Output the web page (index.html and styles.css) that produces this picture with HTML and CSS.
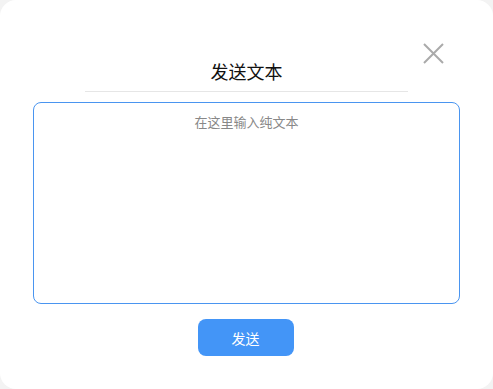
FILE: index.html
```html
<!DOCTYPE html>
<html lang="zh-CN">
<head>
  <meta charset="UTF-8">
  <meta name="viewport" content="width=device-width, initial-scale=1.0">
  <title>发送文本</title>
  <link rel="stylesheet" href="styles.css">
</head>
<body>

  <div class="dialog">
    <!-- 关闭按钮 -->
    <button class="close-btn" aria-label="关闭">
      <svg width="21" height="21" viewBox="0 0 21 21">
        <path d="M1 1 L20 20 M20 1 L1 20" stroke="#aaaaaa" stroke-width="2" fill="none"/>
      </svg>
    </button>

    <div class="dialog-header">
      <h2>发送文本</h2>
    </div>

    <textarea class="text-input" placeholder="在这里输入纯文本"></textarea>

    <div class="dialog-footer">
      <button class="send-btn">发送</button>
    </div>
  </div>

</body>
</html>
```

FILE: styles.css
```css
body {
  margin: 0;
  padding: 0;
  background-color: #f3f3f3;
  font-family: 'Noto Sans CJK SC', 'Noto Sans', sans-serif;
}

.dialog {
  position: relative;
  width: 493px;
  height: 389px;
  box-sizing: border-box;
  background-color: #fff;
  border-radius: 16px;
  padding: 0 33px;
  display: flex;
  flex-direction: column;
  align-items: center;
}

.close-btn {
  position: absolute;
  top: 43px;
  right: 49px;
  padding: 0;
  border: none;
  background: none;
  cursor: pointer;
  line-height: 0;
}

.dialog-header {
  width: 323px;
  padding-top: 59px;
  padding-bottom: 8px;
  border-bottom: 1px solid #e6e6e6;
  text-align: center;
}

h2 {
  margin: 0;
  font-size: 18px;
  font-weight: 400;
  line-height: 24px;
  color: #111;
}

.text-input {
  margin-top: 10px;
  width: 100%;
  height: 202px;
  box-sizing: border-box;
  border: 1px solid #4a95f0;
  border-radius: 8px;
  padding: 10px 12px;
  font-family: inherit;
  font-size: 13px;
  line-height: 18px;
  text-align: center;
  color: #333;
  resize: none;
  outline: none;
}

.text-input::placeholder {
  color: #888;
}

.dialog-footer {
  margin-top: 15px;
  margin-right: 2px;
}

.send-btn {
  width: 96px;
  height: 37px;
  border: none;
  border-radius: 8px;
  background-color: #4395f7;
  color: #fff;
  font-family: inherit;
  font-size: 14px;
  cursor: pointer;
}
```
